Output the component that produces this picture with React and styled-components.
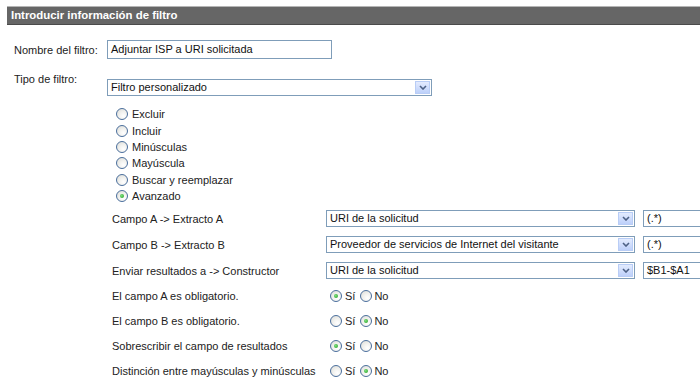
import React from "react";
import styled, { createGlobalStyle } from "styled-components";

const Global = createGlobalStyle`
  html, body { margin: 0; padding: 0; background: #fff; }
  body {
    font-family: Tahoma, "Liberation Sans", Arial, sans-serif;
    font-size: 11px;
    color: #222;
  }
`;

const Page = styled.div`
  width: 700px;
  height: 381px;
  overflow: hidden;
  padding: 6px 0 0 7px;
  box-sizing: border-box;
`;

const Header = styled.div`
  height: 19px;
  box-sizing: border-box;
  background: #666;
  border-top: 1px solid #b5b5b5;
  border-bottom: 1px solid #4a4a4a;
  color: #fff;
  font-weight: bold;
  font-size: 11.4px;
  line-height: 17px;
  padding-left: 4px;
  white-space: nowrap;
`;

const Form = styled.div`
  padding-left: 7px;
  display: flex;
  flex-direction: column;
`;

const NameRow = styled.div`
  display: flex;
  align-items: center;
  margin-top: 15px;
`;

const TypeRow = styled.div`
  display: flex;
  align-items: flex-start;
  margin-top: 13px;
`;

const Label = styled.div`
  width: ${(p) => p.$w}px;
  flex: none;
  line-height: 14px;
  white-space: nowrap;
`;

const TextBox = styled.div`
  width: ${(p) => p.$w}px;
  height: ${(p) => p.$h || 17}px;
  box-sizing: border-box;
  border: 1px solid #7f9db9;
  background: #fff;
  padding-left: 3px;
  line-height: ${(p) => (p.$h || 17) - 2}px;
  white-space: nowrap;
  overflow: hidden;
  flex: none;
  color: #111;
`;

const SelectBox = styled.div`
  width: ${(p) => p.$w}px;
  height: 17px;
  box-sizing: border-box;
  border: 1px solid #7f9db9;
  background: #fff;
  display: flex;
  align-items: stretch;
  margin-top: ${(p) => p.$mt || 0}px;
  flex: none;
  color: #111;
`;

const SelectText = styled.div`
  flex: 1;
  padding-left: 3px;
  line-height: 15px;
  white-space: nowrap;
  overflow: hidden;
`;

const ArrowBtn = styled.div`
  width: 15px;
  margin: 1px;
  box-sizing: border-box;
  border: 1px solid #b9cdf6;
  background: linear-gradient(#e3ebfe, #bdd0fa);
  display: flex;
  align-items: center;
  justify-content: center;
`;

const RadioList = styled.div`
  margin-top: 10px;
  margin-bottom: 1.5px;
  margin-left: 102px;
  display: flex;
  flex-direction: column;
`;

const RadioItem = styled.div`
  height: 16.4px;
  display: flex;
  align-items: center;
`;

const Circle = styled.span`
  width: 12px;
  height: 12px;
  box-sizing: border-box;
  border-radius: 50%;
  border: 1px solid #4a6e9c;
  background: radial-gradient(circle at 65% 70%, #ffffff 0%, #f1f1ee 45%, #d9d9d4 100%);
  display: inline-flex;
  align-items: center;
  justify-content: center;
  flex: none;
  margin-left: ${(p) => p.$ml || 0}px;
  margin-right: ${(p) => p.$mr || 4}px;
  &::after {
    content: "";
    display: ${(p) => (p.$on ? "block" : "none")};
    width: 4px;
    height: 4px;
    border-radius: 50%;
    background: radial-gradient(circle at 40% 40%, #7ee07e, #1f9a1f);
  }
`;

const AdvRow = styled.div`
  height: ${(p) => p.$h}px;
  display: flex;
  align-items: center;
  margin-left: 98px;
`;

const Gap = styled.div`
  width: ${(p) => p.$w}px;
  flex: none;
`;

const Opt = styled.span`
  line-height: 14px;
  margin-right: ${(p) => p.$mr || 0}px;
`;

function Chevron() {
  return (
    <svg width="8" height="5" viewBox="0 0 8 5">
      <path d="M1 1 L4 4 L7 1" fill="none" stroke="#4d6185" strokeWidth="1.6" />
    </svg>
  );
}

function Select({ w, mt, children }) {
  return (
    <SelectBox $w={w} $mt={mt}>
      <SelectText>{children}</SelectText>
      <ArrowBtn>
        <Chevron />
      </ArrowBtn>
    </SelectBox>
  );
}

const types = ["Excluir", "Incluir", "Minúsculas", "Mayúscula", "Buscar y reemplazar", "Avanzado"];

const fields = [
  ["Campo A -> Extracto A", "URI de la solicitud", "(.*)"],
  ["Campo B -> Extracto B", "Proveedor de servicios de Internet del visitante", "(.*)"],
  ["Enviar resultados a -> Constructor", "URI de la solicitud", "$B1-$A1"],
];

const yesNo = [
  ["El campo A es obligatorio.", true],
  ["El campo B es obligatorio.", false],
  ["Sobrescribir el campo de resultados", true],
  ["Distinción entre mayúsculas y minúsculas", false],
];

export default function App() {
  return (
    <>
      <Global />
      <Page>
        <Header>Introducir información de filtro</Header>
        <Form>
          <NameRow>
            <Label $w={93}>Nombre del filtro:</Label>
            <TextBox $w={225} $h={19}>Adjuntar ISP a URI solicitada</TextBox>
          </NameRow>
          <TypeRow>
            <Label $w={93}>Tipo de filtro:</Label>
            <Select w={325} mt={7}>Filtro personalizado</Select>
          </TypeRow>
          <RadioList>
            {types.map((t) => (
              <RadioItem key={t}>
                <Circle $on={t === "Avanzado"} />
                <Opt>{t}</Opt>
              </RadioItem>
            ))}
          </RadioList>
          {fields.map(([l, s, v]) => (
            <AdvRow key={l} $h={26}>
              <Label $w={214}>{l}</Label>
              <Select w={309}>{s}</Select>
              <Gap $w={8} />
              <TextBox $w={70}>{v}</TextBox>
            </AdvRow>
          ))}
          {yesNo.map(([l, yes]) => (
            <AdvRow key={l} $h={25}>
              <Label $w={214}>{l}</Label>
              <Circle $on={yes} $ml={4} $mr={3} />
              <Opt $mr={5}>Sí</Opt>
              <Circle $on={!yes} $mr={2} />
              <Opt>No</Opt>
            </AdvRow>
          ))}
        </Form>
      </Page>
    </>
  );
}
